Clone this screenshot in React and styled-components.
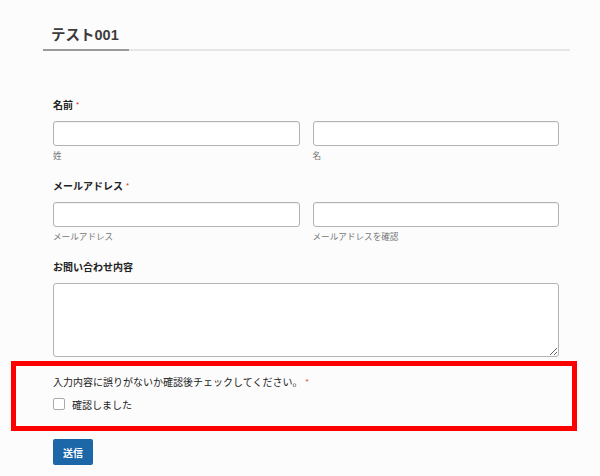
import React from "react";
import styled, { createGlobalStyle } from "styled-components";

const Global = createGlobalStyle`
  html, body { margin: 0; padding: 0; background: #fcfcfc; }
  * { box-sizing: border-box; }
  body { font-family: "Liberation Sans", "Noto Sans CJK JP", sans-serif; }
`;

const Page = styled.div`
  width: 600px;
  height: 476px;
  background: #fcfcfc;
  padding: 24px 0 0 11px;
  overflow: hidden;
`;

const Header = styled.div`
  margin-left: 32px;
  width: 527px;
  border-bottom: 2px solid #e6e6e6;
  display: flex;
`;

const Title = styled.h1`
  margin: 0 0 -2px 0;
  padding: 0 10px 3px 8px;
  font-size: 14.5px;
  line-height: 22px;
  font-weight: bold;
  color: #3c3c3c;
  border-bottom: 2px solid #9a9a9a;
`;

const Form = styled.div`
  margin: 47px 0 0 42px;
  width: 506px;
  display: flex;
  flex-direction: column;
  gap: 17px;
`;

const Field = styled.div`
  display: flex;
  flex-direction: column;
`;

const Label = styled.div`
  font-size: 10px;
  line-height: 15px;
  font-weight: bold;
  color: #222;
  margin-bottom: 8px;
  display: flex;
  align-items: flex-start;
`;

const Req = styled.span`
  color: #e03030;
  font-size: 8px;
  line-height: 10px;
  margin: 2px 0 0 3px;
  font-weight: normal;
`;

const Pair = styled.div`
  display: grid;
  grid-template-columns: 1fr 1fr;
  column-gap: 13px;
`;

const Input = styled.input`
  display: block;
  width: 100%;
  height: 25px;
  border: 1px solid #b3b3b3;
  border-radius: 3px;
  background: #fff;
  box-shadow: inset 0 1px 1px rgba(0, 0, 0, 0.06);
  padding: 0 6px;
  margin: 0;
  outline: none;
`;

const Sub = styled.div`
  margin-top: 4px;
  font-size: 8.6px;
  line-height: 12px;
  color: #777;
`;

const Area = styled.textarea`
  display: block;
  width: 100%;
  height: 74px;
  border: 1px solid #b3b3b3;
  border-radius: 3px;
  background: #fff;
  margin: 0;
  padding: 4px 6px;
  outline: none;
  resize: both;
  font-family: inherit;
`;

const Confirm = styled.div`
  margin-top: 4px;
  width: 566px;
  border: 5px solid #ff0000;
  padding: 8.5px 0 14.5px 37px;
  display: flex;
  flex-direction: column;
  gap: 7px;
`;

const Question = styled.div`
  font-size: 10px;
  line-height: 15px;
  color: #222;
  display: flex;
  align-items: flex-start;
`;

const CheckRow = styled.label`
  display: flex;
  align-items: center;
  gap: 7px;
  height: 15px;
  font-size: 10px;
  color: #222;
`;

const Box = styled.span`
  width: 12px;
  height: 12px;
  border: 1px solid #aaa;
  border-radius: 2px;
  background: #fff;
  display: inline-block;
`;

const Button = styled.button`
  margin: 8px 0 0 42px;
  width: 40px;
  height: 26px;
  border: none;
  border-radius: 2px;
  background: #1b67a8;
  color: #fff;
  font-family: inherit;
  font-size: 10px;
  font-weight: bold;
  padding: 0;
  cursor: pointer;
`;

export default function App() {
  return (
    <>
      <Global />
      <Page>
        <Header>
          <Title>テスト001</Title>
        </Header>
        <Form>
          <Field>
            <Label>
              名前<Req>*</Req>
            </Label>
            <Pair>
              <Field>
                <Input />
                <Sub>姓</Sub>
              </Field>
              <Field>
                <Input />
                <Sub>名</Sub>
              </Field>
            </Pair>
          </Field>
          <Field>
            <Label>
              メールアドレス<Req>*</Req>
            </Label>
            <Pair>
              <Field>
                <Input />
                <Sub>メールアドレス</Sub>
              </Field>
              <Field>
                <Input />
                <Sub>メールアドレスを確認</Sub>
              </Field>
            </Pair>
          </Field>
          <Field>
            <Label>お問い合わせ内容</Label>
            <Area />
          </Field>
        </Form>
        <Confirm>
          <Question>
            入力内容に誤りがないか確認後チェックしてください。<Req>*</Req>
          </Question>
          <CheckRow>
            <Box />
            確認しました
          </CheckRow>
        </Confirm>
        <Button>送信</Button>
      </Page>
    </>
  );
}
